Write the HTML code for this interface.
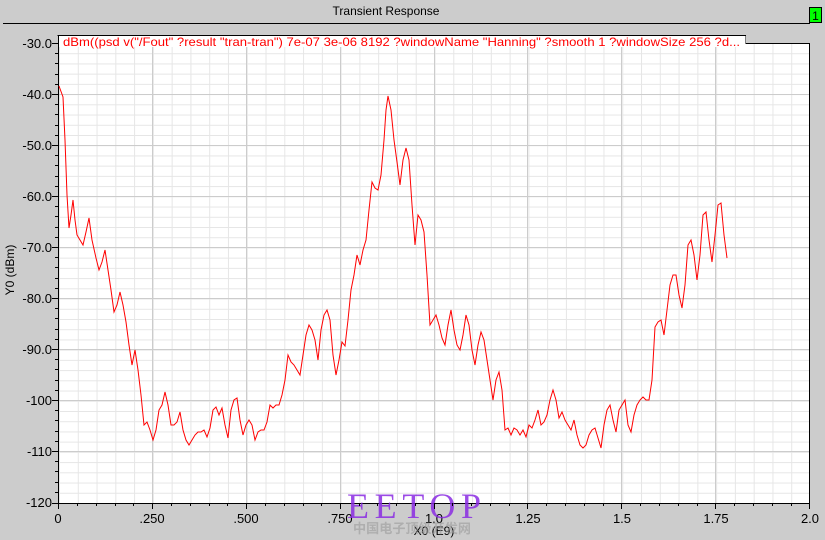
<!DOCTYPE html>
<html><head><style>
html,body{margin:0;padding:0;background:#cccccc;width:825px;height:540px;overflow:hidden;font-family:"Liberation Sans","Noto Sans CJK SC",sans-serif}
</style></head><body>
<svg width="825" height="540" xmlns="http://www.w3.org/2000/svg" style="position:absolute;left:0;top:0">
<defs>
<pattern id="mn" x="59" y="43" width="18.775" height="10.222" patternUnits="userSpaceOnUse">
<path d="M0.5 0V10.222M0 0.5H18.775" stroke="#e6e6e6" stroke-width="1" fill="none"/>
</pattern>
</defs>
<rect x="0" y="0" width="825" height="540" fill="#cccccc"/>
<text x="386" y="15" font-size="12" text-anchor="middle" fill="#000">Transient Response</text>
<line x1="3" y1="23.5" x2="810" y2="23.5" stroke="#000"/>
<rect x="809.5" y="7.5" width="12" height="15" fill="#00ff00" stroke="#000"/>
<text x="815.5" y="20" font-size="12" text-anchor="middle" fill="#000">1</text>
<rect x="58" y="43" width="752" height="460" fill="#fff"/>
<rect x="58" y="43" width="752" height="460" fill="url(#mn)"/>
<g stroke="#cccccc" stroke-width="1">
<line x1="152.5" y1="43" x2="152.5" y2="503"/><line x1="246.5" y1="43" x2="246.5" y2="503"/><line x1="340.5" y1="43" x2="340.5" y2="503"/><line x1="434.5" y1="43" x2="434.5" y2="503"/><line x1="527.5" y1="43" x2="527.5" y2="503"/><line x1="621.5" y1="43" x2="621.5" y2="503"/><line x1="715.5" y1="43" x2="715.5" y2="503"/>
<line x1="58" y1="94.5" x2="810" y2="94.5"/><line x1="58" y1="145.5" x2="810" y2="145.5"/><line x1="58" y1="196.5" x2="810" y2="196.5"/><line x1="58" y1="247.5" x2="810" y2="247.5"/><line x1="58" y1="298.5" x2="810" y2="298.5"/><line x1="58" y1="349.5" x2="810" y2="349.5"/><line x1="58" y1="400.5" x2="810" y2="400.5"/><line x1="58" y1="451.5" x2="810" y2="451.5"/>
</g>
<path d="M58 36V35.5H745.5V43.5H809.5V503.5" stroke="#000" fill="none"/>
<rect x="58.5" y="36" width="687" height="11" fill="#fff"/>
<path d="M58.5 35V503.5H810" stroke="#000" fill="none"/>
<text x="63" y="46" font-size="12" fill="#ff0000" textLength="677" lengthAdjust="spacingAndGlyphs">dBm((psd v("/Fout" ?result "tran-tran") 7e-07 3e-06 8192 ?windowName "Hanning" ?smooth 1 ?windowSize 256 ?d...</text>
<g font-size="13" fill="#000" text-anchor="end">
<text x="52" y="48">-30.0</text><text x="52" y="99">-40.0</text><text x="52" y="150">-50.0</text><text x="52" y="201">-60.0</text><text x="52" y="252">-70.0</text><text x="52" y="303">-80.0</text><text x="52" y="354">-90.0</text><text x="52" y="405">-100</text><text x="52" y="456">-110</text><text x="52" y="507">-120</text>
</g>
<g font-size="13" fill="#000" text-anchor="middle">
<text x="58" y="523">0</text><text x="152" y="523">.250</text><text x="246" y="523">.500</text><text x="340" y="523">.750</text><text x="434" y="523">1.0</text><text x="528" y="523">1.25</text><text x="622" y="523">1.5</text><text x="716" y="523">1.75</text><text x="810" y="523">2.0</text>
</g>
<text x="14" y="270" font-size="12" fill="#000" text-anchor="middle" transform="rotate(-90 14 270)">Y0 (dBm)</text>
<text x="434" y="535" font-size="12" fill="#000" text-anchor="middle">X0 (E9)</text>
<text x="353" y="533" font-size="13" font-weight="bold" fill="#999" fill-opacity="0.6" textLength="118" lengthAdjust="spacingAndGlyphs">中国电子顶级开发网</text>
<text x="347" y="518" font-size="36" font-family="Liberation Serif,serif" fill="#8a2be2" fill-opacity="0.85" textLength="134" lengthAdjust="spacing">EETOP</text>
<polyline fill="none" stroke="#ff0000" stroke-width="1" points="59,86 63,97 65,140 67,195 69,228 71,215 73,200 75,220 77,235 80,240 83,245 86,232 89,218 92,240 96,258 99,270 102,262 105,250 108,270 111,290 114,312 117,305 120,292 123,305 126,322 129,345 132,365 135,350 138,370 141,395 144,425 147,422 150,430 153,440 156,430 159,410 162,405 165,392 168,405 171,425 174,425 177,422 180,412 183,430 186,440 189,445 192,440 195,435 198,432 201,432 204,430 207,437 210,428 213,410 216,407 219,415 222,408 225,425 228,438 231,410 234,400 237,398 240,420 243,435 246,425 249,420 252,425 255,440 258,432 261,430 264,430 267,422 270,405 273,408 276,405 279,405 282,395 285,380 288,355 291,362 294,365 297,370 300,375 303,355 306,335 309,325 312,330 315,340 318,360 321,330 324,315 327,310 330,320 333,355 336,375 339,360 342,342 345,346 348,320 351,290 354,275 357,255 360,265 363,250 366,240 369,210 372,182 375,188 378,190 381,175 384,140 386,110 388,96 391,110 394,140 397,162 400,185 403,160 406,148 409,160 412,205 415,245 418,215 421,220 424,232 427,275 430,325 433,320 436,315 439,325 442,338 445,345 448,325 451,310 454,330 457,345 460,350 463,335 466,315 469,325 472,350 475,365 478,345 481,332 484,340 487,360 490,380 493,400 496,380 499,372 502,390 505,430 508,428 511,435 514,428 517,430 520,435 523,430 526,437 529,425 532,428 535,420 538,410 541,425 544,422 547,415 550,400 553,390 556,400 559,418 562,412 565,420 568,425 571,430 574,420 577,435 580,445 583,448 586,445 589,435 592,430 595,428 598,438 601,448 604,425 607,410 610,405 613,420 616,432 619,410 622,405 625,400 628,425 631,432 634,415 637,405 640,400 643,397 646,400 649,400 652,380 655,327 658,322 661,320 664,335 667,310 670,285 673,275 676,275 679,295 682,308 685,285 688,245 691,240 694,255 697,280 700,255 703,215 706,212 709,240 712,262 715,235 718,205 721,203 724,235 727,258"/>
<path stroke="#000" fill="none" d="
M52 43.5H58M52 94.5H58M52 145.5H58M52 196.5H58M52 247.5H58M52 298.5H58M52 349.5H58M52 400.5H58M52 451.5H58M52 503.5H58
M55 53.5H58M55 63.5H58M55 74.5H58M55 84.5H58M55 104.5H58M55 114.5H58M55 125.5H58M55 135.5H58M55 155.5H58M55 165.5H58M55 176.5H58M55 186.5H58M55 206.5H58M55 216.5H58M55 227.5H58M55 237.5H58M55 257.5H58M55 267.5H58M55 278.5H58M55 288.5H58M55 308.5H58M55 318.5H58M55 329.5H58M55 339.5H58M55 359.5H58M55 369.5H58M55 380.5H58M55 390.5H58M55 410.5H58M55 420.5H58M55 431.5H58M55 441.5H58M55 461.5H58M55 471.5H58M55 482.5H58M55 492.5H58
M58.5 503V509M152.5 503V509M246.5 503V509M340.5 503V509M434.5 503V509M527.5 503V509M621.5 503V509M715.5 503V509M809.5 503V509
M77.5 503V506M96.5 503V506M115.5 503V506M133.5 503V506M171.5 503V506M190.5 503V506M209.5 503V506M227.5 503V506M265.5 503V506M284.5 503V506M303.5 503V506M321.5 503V506M359.5 503V506M377.5 503V506M396.5 503V506M415.5 503V506M452.5 503V506M471.5 503V506M490.5 503V506M509.5 503V506M546.5 503V506M565.5 503V506M584.5 503V506M603.5 503V506M640.5 503V506M659.5 503V506M678.5 503V506M697.5 503V506M734.5 503V506M753.5 503V506M772.5 503V506M791.5 503V506"/>
</svg>
</body></html>
